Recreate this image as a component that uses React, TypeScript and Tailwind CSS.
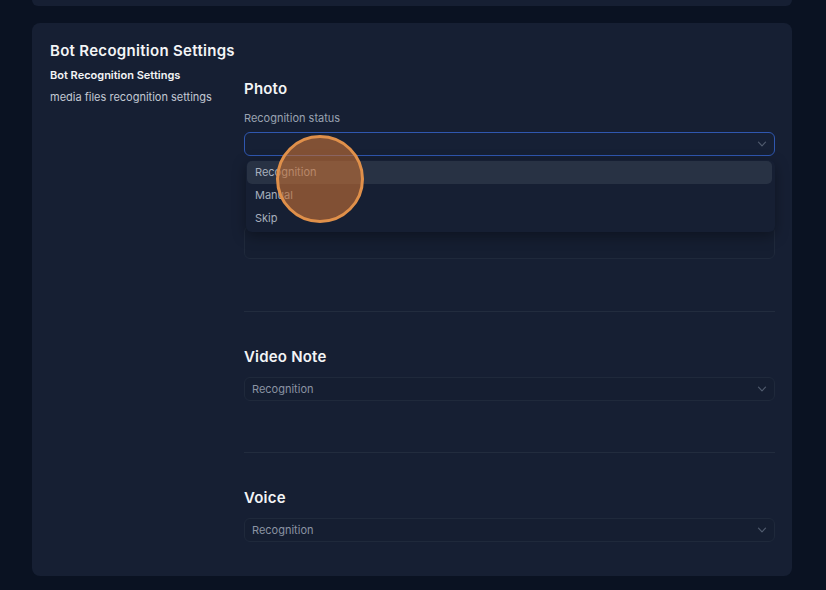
import React from "react";

const Chevron = () => (
  <svg width="10" height="10" viewBox="0 0 10 10" fill="none" className="shrink-0">
    <path d="M1.5 3.2 L5 6.8 L8.5 3.2" stroke="#4f5a6d" strokeWidth="1.2" strokeLinecap="round" strokeLinejoin="round" />
  </svg>
);

const Select = ({ value, focused }: { value?: string; focused?: boolean }) => (
  <div
    className={
      focused
        ? "h-[24px] rounded-[6px] border border-[#2f57b0] bg-[#162035] flex items-center justify-between pl-[7px] pr-[7px]"
        : "h-[24px] rounded-[6px] border border-[#1f293b] bg-[#151e31] flex items-center justify-between pl-[7px] pr-[7px]"
    }
  >
    <span className="text-[11px] text-[#8a93a3] leading-none">{value ?? ""}</span>
    <Chevron />
  </div>
);

export default function App() {
  const font = { fontFamily: "Inter, 'Noto Sans', sans-serif" };
  return (
    <div className="w-[826px] h-[590px] bg-[#0a1222] pl-[32px] pr-[34px] overflow-hidden" style={font}>
      <div className="h-[6px] rounded-b-[8px] bg-[#161f33]" />
      <div className="mt-[17px] h-[553px] rounded-[8px] bg-[#161f33] pt-[18px] pl-[18px] pr-[17px] relative">
        <div className="text-[15px] leading-[20px] font-semibold text-[#f3f4f6] tracking-[0.3px]">Bot Recognition Settings</div>
        <div className="flex">
          <div className="w-[194px] shrink-0 pt-[6px] flex flex-col gap-[6px]">
            <div className="text-[11px] leading-[16px] font-semibold text-[#f3f4f6]">Bot Recognition Settings</div>
            <div className="text-[11px] leading-[16px] text-[#c3c9d3]">media files recognition settings</div>
          </div>
          <div className="flex-1 pt-[17px]">
            {/* Photo */}
            <div className="relative pb-[52px] border-b border-[#222c3e]">
              <div className="text-[15px] leading-[22px] font-semibold text-[#f3f4f6] tracking-[0.2px]">Photo</div>
              <div className="mt-[10px] text-[11px] leading-[16px] text-[#9aa3b2]">Recognition status</div>
              <div className="mt-[6px]">
                <Select focused />
              </div>
              <div className="mt-[70px] h-[33px] rounded-[6px] border border-[#1f293b] bg-[#151e31]" />
              {/* dropdown menu */}
              <div className="absolute left-[2px] right-0 top-[82px] h-[72px] rounded-[6px] bg-[#161f33] shadow-[0_4px_14px_rgba(0,0,0,0.35)] p-[1px] flex flex-col">
                <div className="h-[23px] rounded-[5px] bg-[#283244] flex items-center pl-[8px] mr-[2px] text-[11px] text-[#a7afbd]">Recognition</div>
                <div className="h-[23px] flex items-center pl-[8px] text-[11px] text-[#a7afbd]">Manual</div>
                <div className="h-[23px] flex items-center pl-[8px] text-[11px] text-[#a7afbd]">Skip</div>
              </div>
            </div>
            {/* Video Note */}
            <div className="pt-[34px] pb-[51px] border-b border-[#222c3e]">
              <div className="text-[15px] leading-[22px] font-semibold text-[#f3f4f6] tracking-[0.2px]">Video Note</div>
              <div className="mt-[9px]">
                <Select value="Recognition" />
              </div>
            </div>
            {/* Voice */}
            <div className="pt-[34px]">
              <div className="text-[15px] leading-[22px] font-semibold text-[#f3f4f6] tracking-[0.2px]">Voice</div>
              <div className="mt-[9px]">
                <Select value="Recognition" />
              </div>
            </div>
          </div>
        </div>
        {/* click indicator */}
        <div className="absolute left-[244px] top-[112px] w-[88px] h-[88px] rounded-full border-[3px] border-[#e0904a] bg-[rgba(196,112,54,0.62)]" />
      </div>
    </div>
  );
}
